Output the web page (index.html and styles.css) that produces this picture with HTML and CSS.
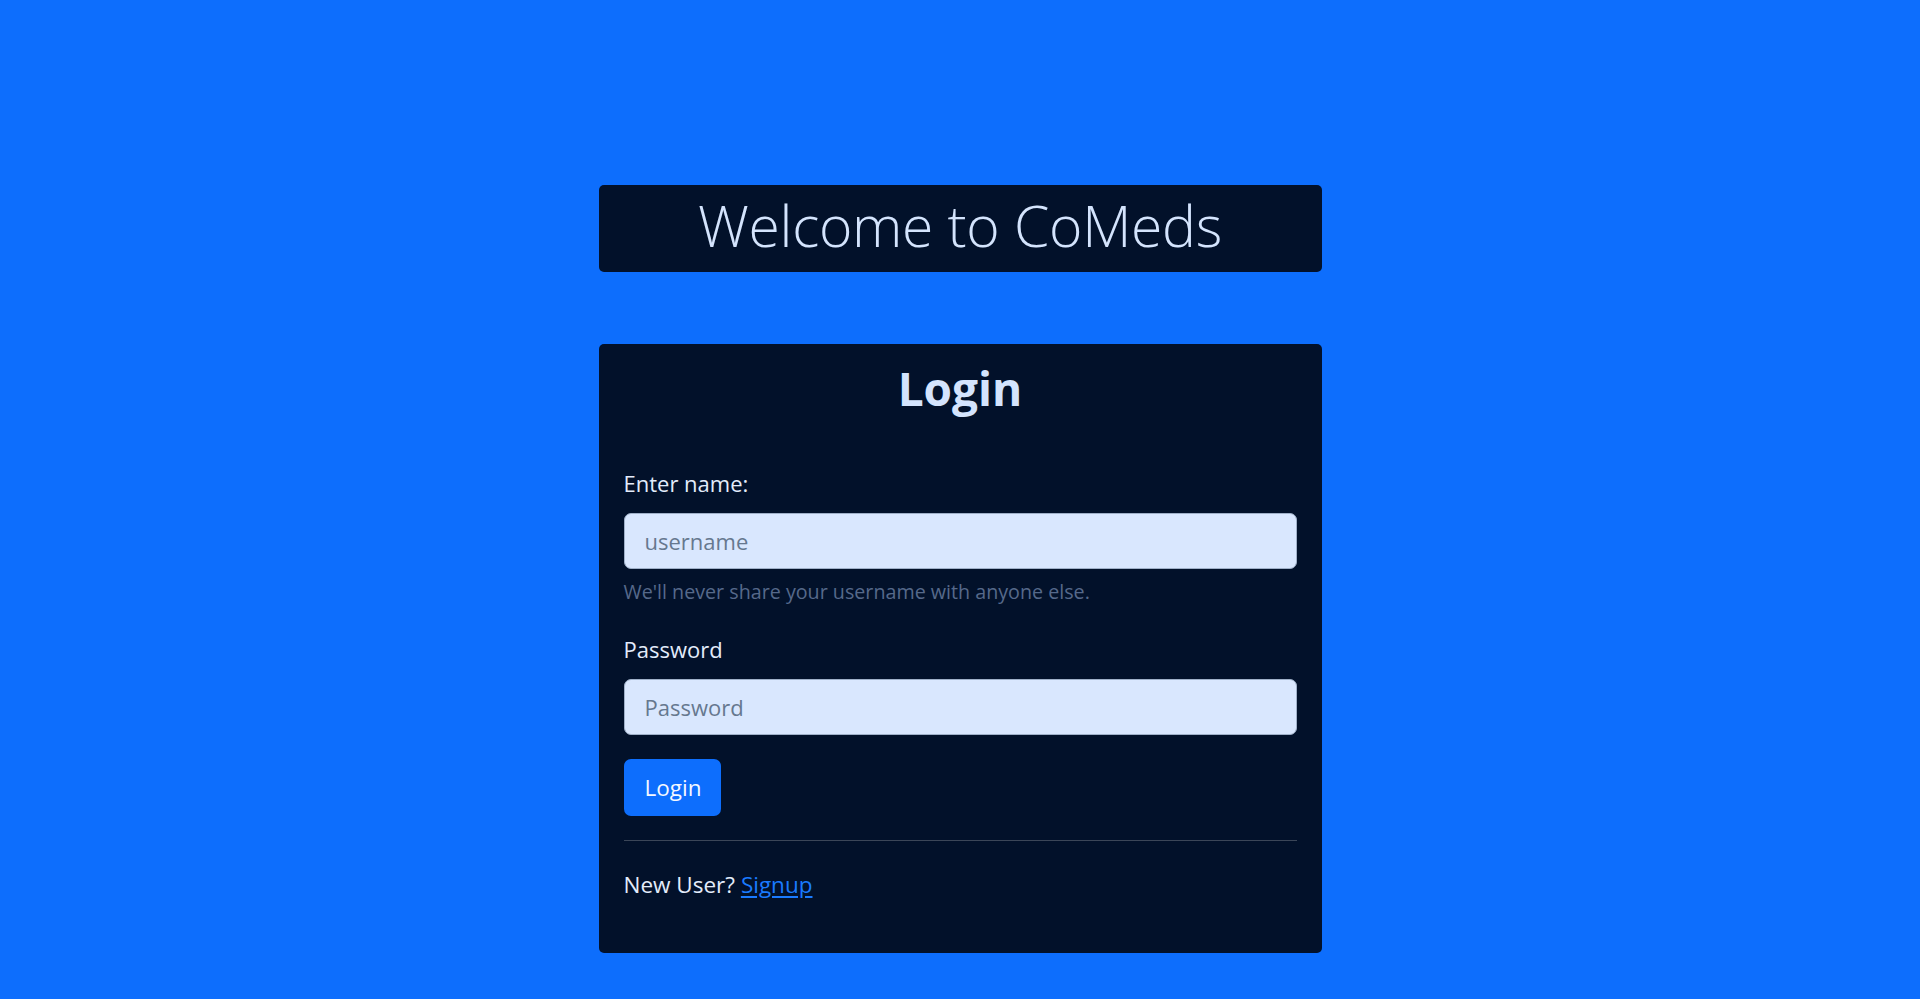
FILE: index.html
```html
<!DOCTYPE html>
<html lang="en">
<head>
<meta charset="utf-8">
<title>CoMeds - Login</title>
<link rel="stylesheet" href="styles.css">
</head>
<body>
<main class="page">
  <header class="welcome">
    <h1 class="welcome-title">Welcome to CoMeds</h1>
  </header>
  <section class="card">
    <h2 class="card-title">Login</h2>
    <form class="form">
      <label class="label" for="username">Enter name:</label>
      <input class="input" id="username" type="text" placeholder="username">
      <div class="help">We'll never share your username with anyone else.</div>
      <label class="label label-pw" for="password">Password</label>
      <input class="input" id="password" type="password" placeholder="Password">
      <button class="btn" type="button">Login</button>
    </form>
    <hr class="divider">
    <p class="signup">New User? <a href="#" class="link">Signup</a></p>
  </section>
</main>
</body>
</html>
```

FILE: styles.css
```css
* { box-sizing: border-box; }
html, body { margin: 0; padding: 0; }
body {
  background: #0d6efd;
  font-family: "Open Sans", "Noto Sans", sans-serif;
  color: #d4e4fd;
  min-height: 999px;
}
.page {
  width: 723px;
  margin: 0 auto;
  padding-top: 185px;
  display: flex;
  flex-direction: column;
  gap: 72px;
}
.welcome {
  background: #02112a;
  border-radius: 5px;
  height: 87px;
  display: flex;
  align-items: center;
  justify-content: center;
}
.welcome-title {
  margin: 0;
  font-weight: 300;
  font-size: 57px;
  line-height: 1;
  letter-spacing: -0.3px;
  color: #d4e4fd;
  padding-bottom: 6px;
}
.card {
  background: #02112a;
  border-radius: 5px;
  padding: 15px 25px 50px;
}
.card-title {
  margin: 0;
  text-align: center;
  font-size: 46px;
  line-height: 58px;
  font-weight: 700;
  color: #d4e4fd;
}
.form {
  display: flex;
  flex-direction: column;
  align-items: flex-start;
  margin-top: 48px;
}
.label {
  font-size: 22px;
  line-height: 36px;
  color: #e3ecfb;
  margin-bottom: 12px;
}
.label-pw { margin-top: 24px; margin-bottom: 12px; }
.input {
  width: 100%;
  height: 56px;
  border: 1px solid #9fb0c8;
  border-radius: 7px;
  background: #d9e7fe;
  padding: 0 20px;
  font-family: inherit;
  font-size: 22px;
  color: #1b2b44;
  outline: none;
}
.input::placeholder { color: #66788f; }
.help {
  margin-top: 8px;
  font-size: 19.7px;
  line-height: 30px;
  color: #56698a;
}
.btn {
  margin-top: 24px;
  height: 57px;
  padding: 0 20px 0 21px;
  border: none;
  border-radius: 7px;
  background: #0d6efd;
  color: #f4f8ff;
  font-family: inherit;
  font-size: 22.5px;
}
.divider {
  margin: 24px 0 0;
  border: 0;
  border-top: 1px solid #3b4658;
}
.signup {
  margin: 26px 0 0;
  font-size: 22.5px;
  line-height: 36px;
  color: #e3ecfb;
}
.link {
  color: #1a7bff;
  text-decoration: underline;
  text-underline-offset: 3px;
}
```
